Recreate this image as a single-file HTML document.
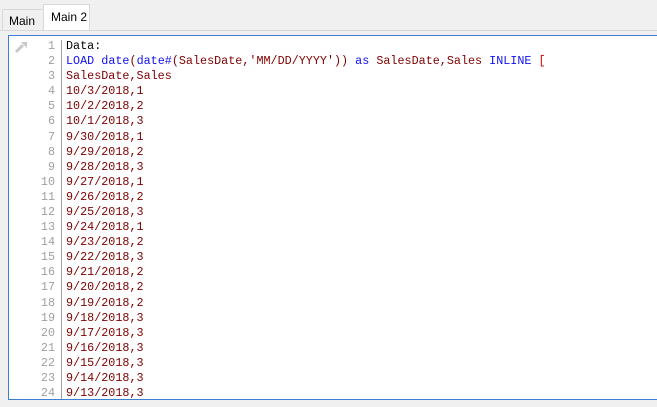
<html><head><style>
body{margin:0;width:657px;height:407px;background:#f0f0f0;position:relative;overflow:hidden;font-family:"Liberation Sans",sans-serif}
.t{position:absolute;font-size:12px;color:#000;box-sizing:border-box;border:1px solid #d9d9d9;border-bottom:none}
#ed{position:absolute;left:8px;top:35px;width:660px;height:365px;background:#fff;border:1px solid #3b7fd0;box-sizing:border-box}
#sep{position:absolute;left:61px;top:40px;width:1px;height:359px;background:#a0a0a0}
.l{position:absolute;left:0;width:657px;height:15px;font-family:"Liberation Mono",monospace;font-size:11.75px;line-height:15px;white-space:pre}
.n{position:absolute;right:602px;color:#a0a0a0;text-align:right}
.c{position:absolute;left:66px;color:#800000}
.k{color:#1010f0}.b{color:#000}.r{color:#e00000}
</style></head><body>
<div class="t" style="left:2px;top:9px;width:42px;height:22px;background:#f0f0f0;padding:4px 0 0 6px">Main</div>
<div class="t" style="left:43px;top:4px;width:47px;height:27px;background:#fff;padding:5px 0 0 7px">Main 2</div>
<div style="position:absolute;left:0;top:30px;width:657px;height:1px;background:#d9d9d9"></div>
<div id="ed"></div>
<div id="sep"></div>
<svg style="position:absolute;left:14px;top:40px" width="16" height="14"><path d="M2 12 L9 5" stroke="#c8c8c8" stroke-width="3"/><path d="M7 2 L13 2 L13 8 Z" fill="#c8c8c8"/></svg>
<div id="lines"></div>
<script>
var L=['<span class="b">Data:</span>','<span class="k">LOAD</span> <span class="k">date</span>(<span class="k">date#</span>(SalesDate,\'MM/DD/YYYY\')) <span class="k">as</span> SalesDate,Sales <span class="k">INLINE</span> <span class="r">[</span>','SalesDate,Sales','10/3/2018,1','10/2/2018,2','10/1/2018,3','9/30/2018,1','9/29/2018,2','9/28/2018,3','9/27/2018,1','9/26/2018,2','9/25/2018,3','9/24/2018,1','9/23/2018,2','9/22/2018,3','9/21/2018,2','9/20/2018,2','9/19/2018,2','9/18/2018,3','9/17/2018,3','9/16/2018,3','9/15/2018,3','9/14/2018,3','9/13/2018,3'];
var h='';for(var i=0;i<L.length;i++){h+='<div class="l" style="top:'+(39+i*15.09)+'px"><span class="n">'+(i+1)+'</span><span class="c">'+L[i]+'</span></div>';}
document.getElementById('lines').innerHTML=h;
</script>
</body></html>
